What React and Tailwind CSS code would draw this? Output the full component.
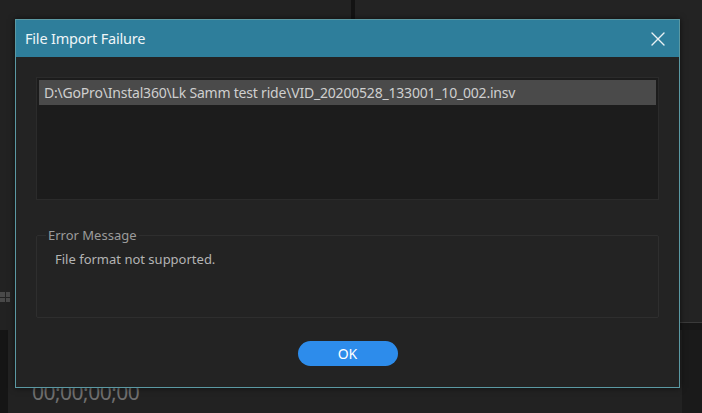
import React from 'react';

const font = { fontFamily: '"Noto Sans", "Open Sans", sans-serif' };

function Background() {
  return (
    <div className="absolute inset-0 flex flex-col">
      {/* upper panels */}
      <div className="flex h-[330px]">
        <div className="w-[351px] bg-[#222222] flex flex-col justify-end pb-[28px]">
          <div className="w-[10px] h-[10px] grid grid-cols-2 gap-[1px] opacity-70">
            <span className="bg-[#5a5a5a]" />
            <span className="bg-[#5a5a5a]" />
            <span className="bg-[#5a5a5a]" />
            <span className="bg-[#5a5a5a]" />
          </div>
        </div>
        <div className="w-[4px] bg-[#131313]" />
        <div className="flex-1 bg-[#232323] flex flex-col justify-end">
          <div className="h-[8px] border-t border-[#3a3a3a] bg-[#171717]" />
        </div>
      </div>
      {/* lower panel */}
      <div className="flex flex-1 bg-[#1d1d1d]">
        <div className="w-[8px] bg-[#151515]" />
        <div className="flex-1 bg-[#222222] pl-[24px] pt-[52px]">
          <div className="text-[21px] leading-none text-[#6f6f6f] tracking-tight">00;00;00;00</div>
        </div>
        <div className="w-[20px] bg-[#1a1a1a]" />
      </div>
    </div>
  );
}

function CloseIcon() {
  return (
    <svg width="14" height="14" viewBox="0 0 14 14" aria-hidden="true">
      <path d="M1 1L13 13M13 1L1 13" stroke="#e8f1f4" strokeWidth="1.4" strokeLinecap="round" />
    </svg>
  );
}

export default function App() {
  return (
    <div className="relative w-[702px] h-[413px] overflow-hidden bg-[#1e1e1e]" style={font}>
      <Background />

      {/* Dialog */}
      <div className="absolute left-[15px] top-[19px] w-[665px] h-[369px] flex flex-col border border-[#5b99a3] bg-[#232323] shadow-[0_0_6px_rgba(0,0,0,0.6)]">
        <div className="flex items-center justify-between h-[37px] bg-[#2e7e9b] pl-[9px] pr-[14px]">
          <span className="text-[14.5px] text-[#eef5f7] tracking-[-0.2px]">File Import Failure</span>
          <CloseIcon />
        </div>

        <div className="flex flex-col flex-1 px-[20px] pt-[20px]">
          {/* file list */}
          <div className="h-[123px] bg-[#1c1c1c] border border-[#2b2b2b] p-[2px]">
            <div className="h-[25px] bg-[#4a4a4a] flex items-center pl-[5px] text-[14px] text-[#cfcfcf] tracking-[-0.2px]">
              D:\GoPro\Instal360\Lk Samm test ride\VID_20200528_133001_10_002.insv
            </div>
          </div>

          {/* error message fieldset */}
          <fieldset className="mt-[29px] h-[89px] border border-[#2e2e2e] rounded-[2px] px-[9px] pb-0">
            <legend className="px-[2px] text-[13px] leading-none text-[#9b9b9b]">Error Message</legend>
            <div className="mt-[8px] pl-[9px] text-[13px] text-[#b4b4b4]">File format not supported.</div>
          </fieldset>

          <div className="flex justify-center mt-[23px]">
            <button className="w-[100px] h-[25px] rounded-full bg-[#2d8ceb] text-[14px] text-white leading-none">
              OK
            </button>
          </div>
        </div>
      </div>
    </div>
  );
}
